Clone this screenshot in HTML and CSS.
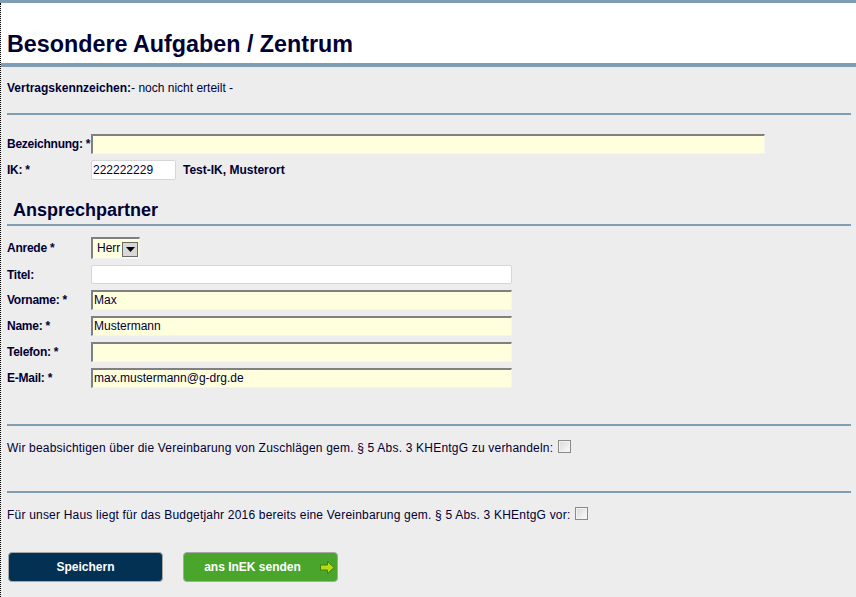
FILE: index.html
```html
<!DOCTYPE html>
<html lang="de">
<head>
<meta charset="utf-8">
<title>Besondere Aufgaben / Zentrum</title>
<link rel="stylesheet" href="styles.css">
</head>
<body>
<div class="topbar"></div>
<div class="page">
  <header class="head">
    <h1 class="title">Besondere Aufgaben / Zentrum</h1>
  </header>
  <div class="headbar"></div>
  <main class="content">
    <p class="vk"><b>Vertragskennzeichen:</b>- noch nicht erteilt -</p>
    <div class="rule"></div>

    <div class="row row-first">
      <span class="label">Bezeichnung: *</span>
      <span class="field field-req field-wide"></span>
    </div>
    <div class="row">
      <span class="label">IK: *</span>
      <span class="field field-plain field-ik">222222229</span>
      <span class="ikname">Test-IK, Musterort</span>
    </div>

    <h2 class="subtitle">Ansprechpartner</h2>
    <div class="rule"></div>

    <div class="row row-anrede">
      <span class="label">Anrede *</span>
      <span class="select">
        <span class="select-val">Herr</span>
        <span class="select-btn"><svg width="9" height="5" viewBox="0 0 9 5"><polygon points="0,0 9,0 4.5,5" fill="#000"/></svg></span>
      </span>
    </div>
    <div class="row row-titel">
      <span class="label">Titel:</span>
      <span class="field field-plain field-mid"></span>
    </div>
    <div class="row">
      <span class="label">Vorname: *</span>
      <span class="field field-req field-mid">Max</span>
    </div>
    <div class="row">
      <span class="label">Name: *</span>
      <span class="field field-req field-mid">Mustermann</span>
    </div>
    <div class="row">
      <span class="label">Telefon: *</span>
      <span class="field field-req field-mid"></span>
    </div>
    <div class="row">
      <span class="label">E-Mail: *</span>
      <span class="field field-req field-mid">max.mustermann@g-drg.de</span>
    </div>

    <div class="rule rule-q1"></div>
    <p class="question">Wir beabsichtigen über die Vereinbarung von Zuschlägen gem. § 5 Abs. 3 KHEntgG zu verhandeln: <span class="check"></span></p>

    <div class="rule rule-q2"></div>
    <p class="question">Für unser Haus liegt für das Budgetjahr 2016 bereits eine Vereinbarung gem. § 5 Abs. 3 KHEntgG vor: <span class="check"></span></p>

    <div class="buttons">
      <span class="btn btn-save">Speichern</span>
      <span class="btn btn-send">ans InEK senden
        <svg class="arrow" width="15" height="13" viewBox="0 0 15 13"><polygon points="0.5,4 7.5,4 7.5,0.5 14,6.5 7.5,12.5 7.5,9 0.5,9" fill="#b6dc12" stroke="#4d7d10" stroke-width="1"/></svg>
      </span>
    </div>
  </main>
</div>
</body>
</html>
```

FILE: styles.css
```css
html, body {
  margin: 0;
  padding: 0;
}
body {
  background: #ededed;
  font-family: "Liberation Sans", Arial, sans-serif;
  font-size: 12px;
  color: #000033;
  width: 856px;
  height: 597px;
  overflow: hidden;
}
.topbar {
  height: 3px;
  background: #7f9db3;
}
.page {
  border-left: 1px dotted #000;
  min-height: 594px;
}
.head {
  background: #fff;
  height: 60px;
  padding-left: 6px;
  box-sizing: border-box;
  padding-top: 28px;
}
.title {
  margin: 0;
  font-size: 23.3px;
  line-height: 27px;
  font-weight: bold;
  color: #000033;
}
.headbar {
  height: 4px;
  background: #7f9db3;
}
.content {
  padding: 0 5px 0 6px;
}
.vk {
  margin: 0;
  padding-top: 13px;
  line-height: 16px;
  height: 33px;
}
.rule {
  height: 2px;
  background: #7f9db3;
}
.row {
  display: flex;
  align-items: center;
  height: 20px;
  margin-top: 6px;
}
.row-first {
  margin-top: 19px;
}
.label {
  width: 84px;
  font-weight: bold;
  flex: none;
  white-space: nowrap;
  letter-spacing: -0.25px;
}
.field {
  box-sizing: border-box;
  height: 20px;
  line-height: 17px;
  padding-left: 1px;
  font-size: 12px;
  color: #000033;
  white-space: nowrap;
  flex: none;
}
.field-req {
  background: #ffffdd;
  border-top: 2px solid #808080;
  border-left: 2px solid #808080;
  border-right: 1px solid #f4f4f4;
  border-bottom: 1px solid #f4f4f4;
}
.field-plain {
  background: #fff;
  border: 1px solid #d6d6d6;
  border-radius: 2px;
  line-height: 18px;
}
.field-wide { width: 674px; }
.field-ik { width: 85px; }
.field-mid { width: 421px; }
.row-titel { height: 19px; }
.row-titel .field { height: 19px; }
.ikname {
  font-weight: bold;
  margin-left: 7px;
}
.subtitle {
  margin: 19px 0 0 6px;
  font-size: 18px;
  line-height: 22px;
  height: 25px;
  font-weight: bold;
  color: #000033;
}
.row-anrede {
  margin-top: 11px;
  height: 22px;
}
.select {
  display: flex;
  align-items: flex-end;
  box-sizing: border-box;
  width: 49px;
  height: 22px;
  background: #ffffdd;
  border-top: 2px solid #808080;
  border-left: 2px solid #808080;
  border-right: 1px solid #f4f4f4;
  border-bottom: 1px solid #f4f4f4;
}
.select-val {
  flex: 1;
  line-height: 17px;
  padding-left: 4px;
  align-self: center;
  overflow: hidden;
}
.select-btn {
  box-sizing: border-box;
  width: 16px;
  height: 15px;
  background: #d8d8d8;
  border: 1px solid #6a6a6a;
  display: flex;
  align-items: center;
  justify-content: center;
  margin-right: 1px;
  margin-bottom: 1px;
}
.rule-q1 { margin-top: 36px; }
.rule-q2 { margin-top: 35px; }
.question {
  margin: 0;
  padding-top: 14px;
  line-height: 16px;
  letter-spacing: 0.2px;
  display: flex;
  align-items: center;
  gap: 5px;
}
.check {
  display: inline-block;
  box-sizing: border-box;
  width: 13px;
  height: 13px;
  border: 1px solid #8a8a8a;
  background: linear-gradient(135deg, #d8d8d8, #fbfbfb);
  box-shadow: inset 0 0 0 1px #f2f2f2;
  margin-top: -4px;
}
.buttons {
  display: flex;
  gap: 20px;
  margin-top: 29px;
  margin-left: 1px;
}
.btn {
  position: relative;
  box-sizing: border-box;
  width: 155px;
  height: 30px;
  border: 1px solid #a7a7a7;
  border-radius: 4px;
  color: #fff;
  font-weight: bold;
  display: flex;
  align-items: center;
  justify-content: center;
}
.btn-save { background: #033153; }
.btn-send {
  background: #4aa52d;
  padding-right: 16px;
}
.arrow {
  position: absolute;
  right: 2px;
  top: 8px;
}
```
